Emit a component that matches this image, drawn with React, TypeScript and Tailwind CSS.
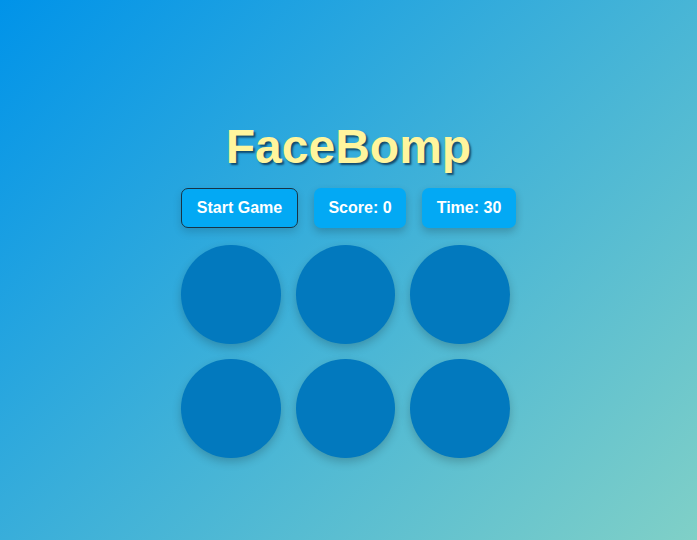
import React from "react";

export default function App() {
  const holes = [0, 1, 2, 3, 4, 5];
  return (
    <div
      className="w-full h-[540px] overflow-hidden flex flex-col items-center pt-[119px] bg-[linear-gradient(135deg,#0093E9_0%,#80D0C7_100%)]"
      style={{ fontFamily: '"Liberation Sans", Arial, sans-serif' }}
    >
      <h1 className="text-[48px] leading-[55px] font-bold text-[#fff59d] [text-shadow:2px_2px_2px_rgba(10,50,80,0.8)]">
        FaceBomp
      </h1>
      <div className="mt-[14px] w-[335px] flex flex-col items-start">
        <div className="flex gap-[16px]">
          <button className="h-[40px] w-[117px] rounded-[7px] border border-[#173446] bg-[#03a9f4] text-white text-[16px] font-bold shadow-[0_4px_8px_rgba(0,0,0,0.15)]">
            Start Game
          </button>
          <div className="h-[40px] w-[92px] flex items-center justify-center rounded-[7px] bg-[#03a9f4] text-white text-[16px] font-bold shadow-[0_4px_8px_rgba(0,0,0,0.2)]">
            Score: 0
          </div>
          <div className="h-[40px] w-[94px] flex items-center justify-center rounded-[7px] bg-[#03a9f4] text-white text-[16px] font-bold shadow-[0_4px_8px_rgba(0,0,0,0.2)]">
            Time: 30
          </div>
        </div>
        <div className="mt-[17px] grid grid-cols-[repeat(3,99.5px)] gap-x-[15px] gap-y-[15px]">
          {holes.map((h) => (
            <div
              key={h}
              className="w-[99.5px] h-[99px] rounded-full bg-[#0279be] shadow-[0_4px_10px_rgba(0,0,0,0.2)]"
            />
          ))}
        </div>
      </div>
    </div>
  );
}
